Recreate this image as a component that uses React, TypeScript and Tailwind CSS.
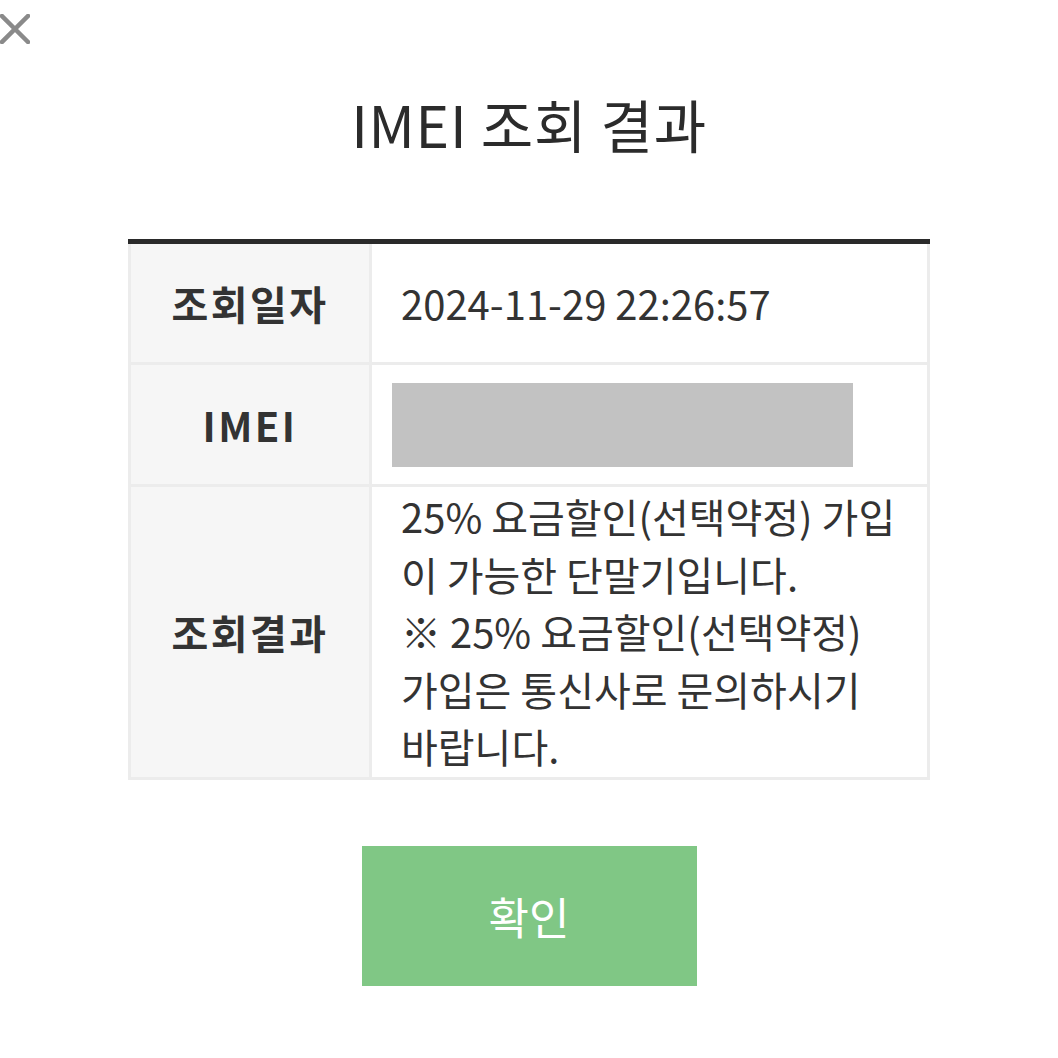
import React from 'react';

const font = { fontFamily: '"Noto Sans CJK KR", "Noto Sans", sans-serif' };

function CloseIcon() {
  return (
    <svg width="30" height="30" viewBox="0 0 30 30" className="block">
      <path d="M2 2 L28 28 M28 2 L2 28" stroke="#8a8a8a" strokeWidth="4.5" strokeLinecap="square" />
    </svg>
  );
}

export default function App() {
  const th = 'bg-[#f6f6f6] border-[3px] border-[#ececec] text-[40px] font-bold tracking-[2.5px] text-[#333]';
  const td = 'border-[3px] border-[#ececec] text-[40px] text-[#333]';

  return (
    <div className="w-[1058px] h-[1058px] bg-white relative text-[#333]" style={font}>
      <button className="absolute left-0 top-[14px]">
        <CloseIcon />
      </button>

      <div className="flex flex-col items-center pt-[84px]">
        <h1 className="text-[57px] leading-[78px] font-normal text-[#2b2b2b] tracking-[0.7px]">IMEI 조회 결과</h1>

        <table className="mt-[77px] w-[802px] border-collapse border-t-[5px] border-t-[#2a2a2a]">
          <tbody>
            <tr className="h-[122px]">
              <th className={`w-[241px] border-t-0 ${th}`}>조회일자</th>
              <td className={`border-t-0 pl-[29px] ${td}`}>2024-11-29 22:26:57</td>
            </tr>
            <tr className="h-[122px]">
              <th className={th}>IMEI</th>
              <td className={`pl-[20px] ${td}`}>
                <div className="w-[461px] h-[84px] bg-[#c2c2c2]" />
              </td>
            </tr>
            <tr className="h-[293px]">
              <th className={th}>조회결과</th>
              <td className={`pl-[29px] pr-[30px] leading-[57.5px] align-middle ${td}`}>
                25% 요금할인(선택약정) 가입이 가능한 단말기입니다.
                <br />※ 25% 요금할인(선택약정) 가입은 통신사로 문의하시기 바랍니다.
              </td>
            </tr>
          </tbody>
        </table>

        <button className="mt-[66px] w-[335px] h-[140px] bg-[#80c785] text-white text-[44px]">확인</button>
      </div>
    </div>
  );
}
